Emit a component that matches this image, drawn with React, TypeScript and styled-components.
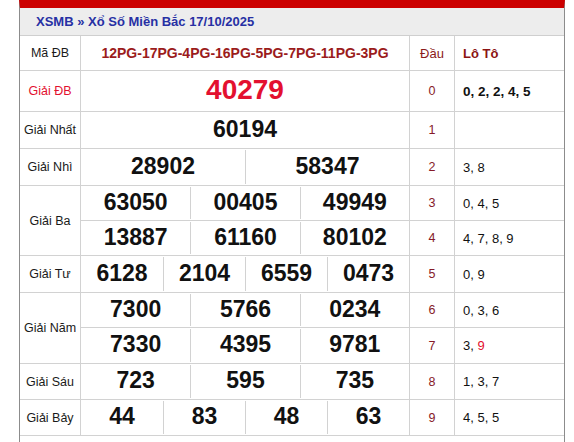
import React from "react";
import styled, { createGlobalStyle } from "styled-components";

const GlobalStyle = createGlobalStyle`
  html, body { margin: 0; padding: 0; background: #ffffff; }
  body { font-family: "Liberation Sans", Arial, sans-serif; }
`;

const Wrapper = styled.div`
  box-sizing: border-box;
  margin-left: 19px;
  width: 546px;
  min-height: 442px;
  border-top: 8px solid #cc0000;
  border-left: 1px solid #8c8c8c;
  border-right: 1px solid #8c8c8c;
`;

const Title = styled.div`
  box-sizing: border-box;
  height: 28px;
  display: flex;
  align-items: center;
  padding-left: 16px;
  background: #ededed;
  border-bottom: 1px solid #cfcfcf;
  color: #2730a4;
  font-size: 13px;
  font-weight: bold;
`;

const Board = styled.div<{ $rows: string }>`
  display: grid;
  grid-template-columns: 61px 329px 45px 1fr;
  grid-template-rows: ${(p) => p.$rows};
`;

const Cell = styled.div<{ $span?: number; $last?: boolean }>`
  box-sizing: border-box;
  display: flex;
  align-items: center;
  justify-content: center;
  border-bottom: 1px solid #d2d2d2;
  border-right: ${(p) => (p.$last ? "none" : "1px solid #d2d2d2")};
  grid-row: span ${(p) => p.$span ?? 1};
  min-width: 0;
`;

const LabelCell = styled(Cell)<{ $red?: boolean }>`
  font-size: 12.5px;
  color: ${(p) => (p.$red ? "#e3102f" : "#1a1a1a")};
`;

const CodeCell = styled(Cell)`
  font-size: 14px;
  font-weight: bold;
  color: #9b1c1c;
`;

const HeadCell = styled(Cell)`
  font-size: 13px;
  color: #8b1a1a;
`;

const LotoHead = styled(Cell)`
  justify-content: flex-start;
  padding-left: 8px;
  font-size: 13px;
  font-weight: bold;
  color: #8b1313;
`;

const NumbersCell = styled(Cell)`
  align-items: stretch;
  padding: 1px 0;
`;

const NumLine = styled.div<{ $cols: number }>`
  flex: 1;
  display: grid;
  grid-template-columns: repeat(${(p) => p.$cols}, 1fr);
`;

const Num = styled.div<{ $big?: boolean }>`
  display: flex;
  align-items: center;
  justify-content: center;
  padding-bottom: 2px;
  font-size: ${(p) => (p.$big ? "28px" : "23px")};
  font-weight: bold;
  color: ${(p) => (p.$big ? "#e3102f" : "#111111")};
  & + & {
    border-left: 1px solid #d2d2d2;
  }
`;

const HeadDigit = styled(Cell)`
  font-size: 12.5px;
  color: #861a28;
`;

const LotoCell = styled(Cell)<{ $bold?: boolean }>`
  justify-content: flex-start;
  padding-left: 8px;
  font-size: ${(p) => (p.$bold ? "13.5px" : "13px")};
  font-weight: ${(p) => (p.$bold ? "bold" : "normal")};
  color: #111111;
`;

const LotoText = styled.span`
  white-space: pre;
`;

const Hit = styled.span`
  color: #e3102f;
`;

type Prize = { label: string; red?: boolean; big?: boolean; lines: string[][] };

const prizes: Prize[] = [
  { label: "Giải ĐB", red: true, big: true, lines: [["40279"]] },
  { label: "Giải Nhất", lines: [["60194"]] },
  { label: "Giải Nhì", lines: [["28902", "58347"]] },
  { label: "Giải Ba", lines: [["63050", "00405", "49949"], ["13887", "61160", "80102"]] },
  { label: "Giải Tư", lines: [["6128", "2104", "6559", "0473"]] },
  { label: "Giải Năm", lines: [["7300", "5766", "0234"], ["7330", "4395", "9781"]] },
  { label: "Giải Sáu", lines: [["723", "595", "735"]] },
  { label: "Giải Bảy", lines: [["44", "83", "48", "63"]] },
];

const loto: React.ReactNode[] = [
  "0, 2, 2, 4, 5",
  "",
  "3, 8",
  "0, 4, 5",
  "4, 7, 8, 9",
  "0, 9",
  "0, 3, 6",
  <>
    {"3, "}
    <Hit>9</Hit>
  </>,
  "1, 3, 7",
  "4, 5, 5",
];

const rowHeights = [35, 41, 37, 37, 35, 35, 37, 35, 36, 36, 36];

export default function App() {
  let digit = 0;
  return (
    <>
      <GlobalStyle />
      <Wrapper>
        <Title>XSMB » Xổ Số Miền Bắc 17/10/2025</Title>
        <Board $rows={rowHeights.map((h) => `${h}px`).join(" ")}>
          <LabelCell>Mã ĐB</LabelCell>
          <CodeCell>12PG-17PG-4PG-16PG-5PG-7PG-11PG-3PG</CodeCell>
          <HeadCell>Đầu</HeadCell>
          <LotoHead $last>Lô Tô</LotoHead>
          {prizes.map((p) => (
            <React.Fragment key={p.label}>
              <LabelCell $red={p.red} $span={p.lines.length}>
                {p.label}
              </LabelCell>
              {p.lines.map((line, i) => {
                const d = digit++;
                return (
                  <React.Fragment key={i}>
                    <NumbersCell>
                      <NumLine $cols={line.length}>
                        {line.map((n, j) => (
                          <Num key={j} $big={p.big}>
                            {n}
                          </Num>
                        ))}
                      </NumLine>
                    </NumbersCell>
                    <HeadDigit>{d}</HeadDigit>
                    <LotoCell $last $bold={d === 0}>
                      <LotoText>{loto[d]}</LotoText>
                    </LotoCell>
                  </React.Fragment>
                );
              })}
            </React.Fragment>
          ))}
        </Board>
      </Wrapper>
    </>
  );
}
